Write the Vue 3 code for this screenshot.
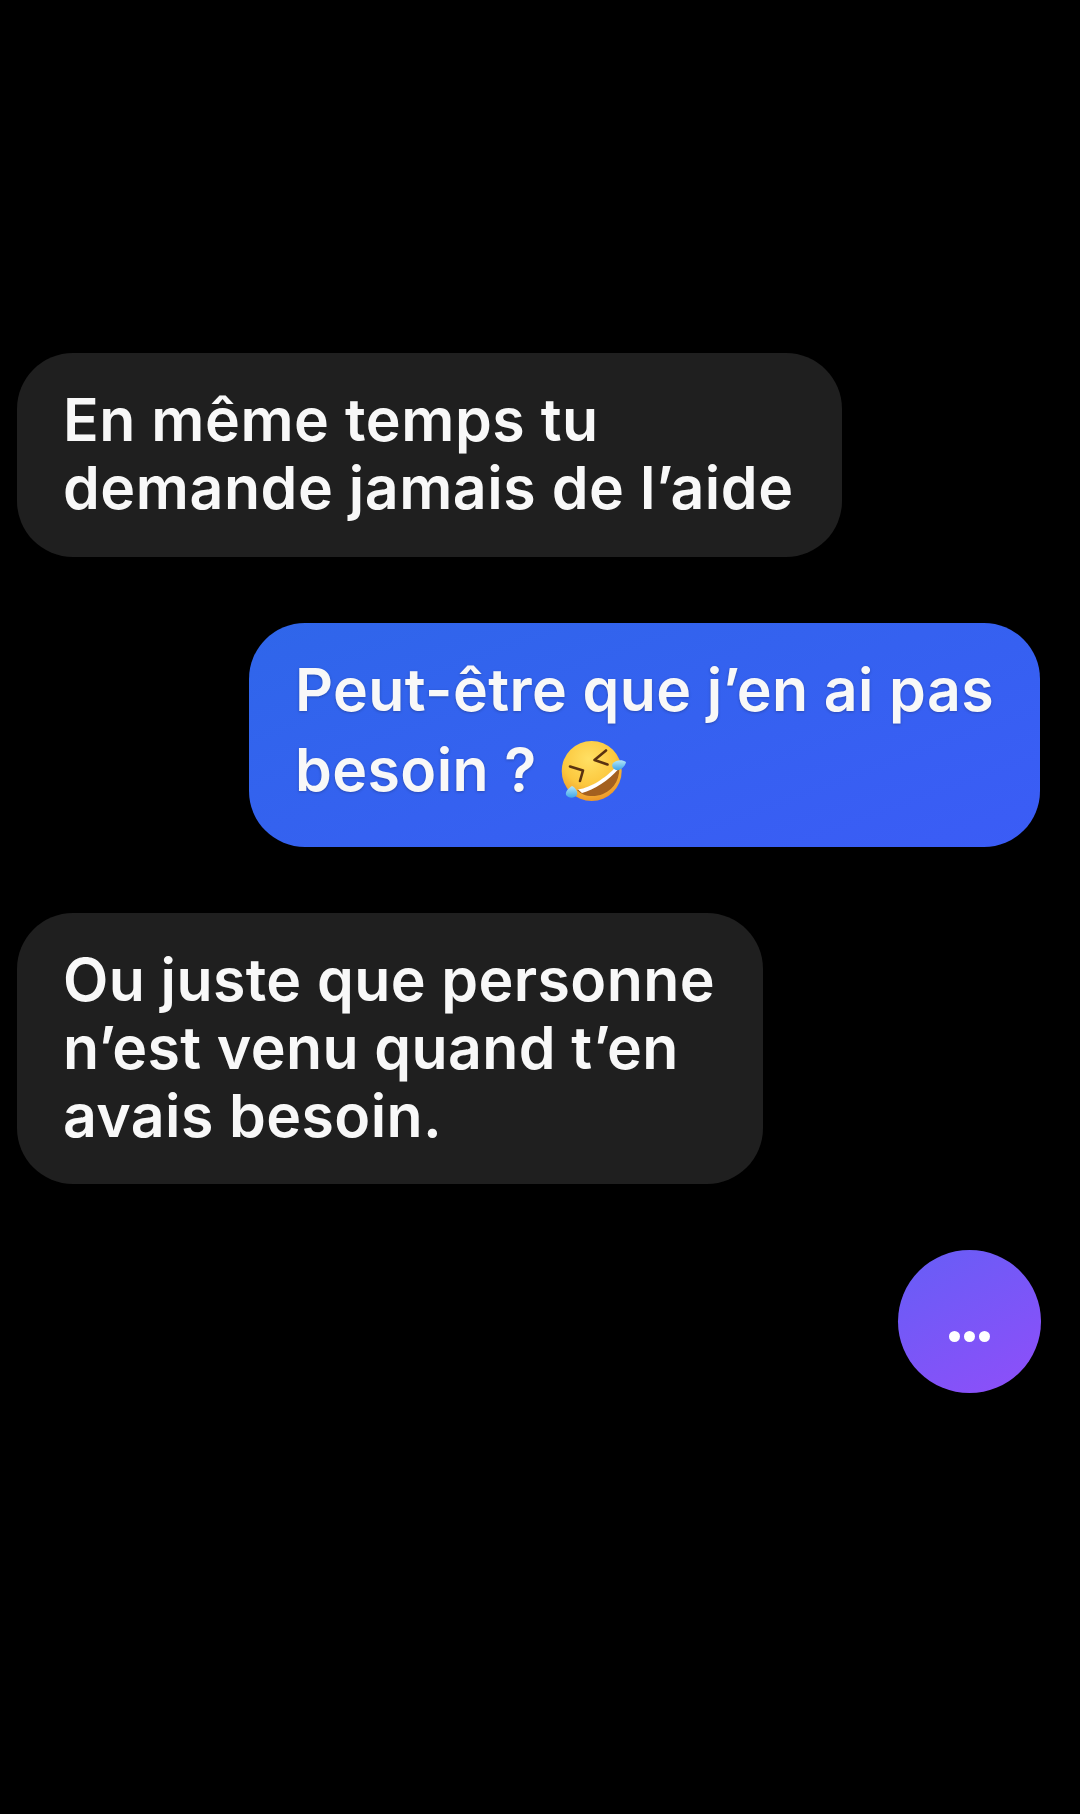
<template>
  <div class="chat">
    <div class="bubble other first">En même temps tu<br>demande jamais de l’aide</div>
    <div class="bubble mine">
      Peut-être que j’en ai pas<br>
      <span class="line">besoin ?
        <svg class="emoji" viewBox="18 5 68 64" width="68" height="64">
          <defs>
            <radialGradient id="face" cx="45%" cy="30%" r="72%">
              <stop offset="0" stop-color="#ffe064" />
              <stop offset="0.6" stop-color="#fcc83e" />
              <stop offset="1" stop-color="#ec9428" />
            </radialGradient>
            <linearGradient id="tear" x1="0" y1="0" x2="0" y2="1">
              <stop offset="0" stop-color="#b4e6f8" />
              <stop offset="1" stop-color="#3fa6ea" />
            </linearGradient>
          </defs>
          <circle cx="50.7" cy="38" r="30" fill="url(#face)" />
          <path d="M36 57 C50 56 68 44 78 30 C80 44 74 56 62 61 C52 65 41 63 36 57Z" fill="#a4601f" />
          <path d="M37 56.5 C50 55 68 43 77 31 L77.5 36 C68 47 53 57 41 60Z" fill="#fff" />
          <path d="M29 33.5 L42 37.5 L39 48" fill="none" stroke="#5a3210" stroke-width="2.6" stroke-linecap="round" stroke-linejoin="round" />
          <path d="M65 17.5 L53.5 27 L66.5 31.5" fill="none" stroke="#5a3210" stroke-width="2.6" stroke-linecap="round" stroke-linejoin="round" />
          <path d="M72 30 C75 27 81 26 85 29 C84 34 79 38 75 37 C72 36 70 33 72 30Z" fill="url(#tear)" />
          <path d="M31 53 C35 55 37 59 36 62 C33 66 27 65 25 62 C24 58 28 55 31 53Z" fill="url(#tear)" />
        </svg>
      </span>
    </div>
    <div class="bubble other last">Ou juste que personne<br>n’est venu quand t’en<br>avais besoin.</div>
    <div class="typing">
      <span class="dot"></span>
      <span class="dot"></span>
      <span class="dot"></span>
    </div>
  </div>
</template>

<script setup>
</script>

<style>
html, body {
  background: #000;
}
</style>

<style scoped>
.chat {
  width: 1080px;
  height: 1814px;
  box-sizing: border-box;
  padding: 353px 40px 0 17px;
  display: flex;
  flex-direction: column;
  gap: 66px;
  background: #000;
  font-family: Inter, "Liberation Sans", sans-serif;
  overflow: hidden;
}
.bubble {
  width: fit-content;
  box-sizing: border-box;
  padding: 33px 47px 34px 46px;
  border-radius: 56px;
  font-size: 59px;
  font-weight: 600;
  line-height: 68px;
  letter-spacing: 0.4px;
  color: #f8f8f8;
  white-space: nowrap;
}
.first {
  padding-bottom: 35px;
  padding-right: 48px;
  letter-spacing: 0.55px;
}
.last {
  padding-right: 48px;
}
.other {
  background: #1f1f1f;
}
.mine {
  align-self: flex-end;
  background: linear-gradient(160deg, #2f66ea, #3b5cf6);
  padding: 27px 46px 37px;
  line-height: 80px;
  text-shadow: 0 1px 3px rgba(0, 0, 0, 0.25);
}
.line {
  display: inline-flex;
  align-items: center;
  gap: 22px;
}
.emoji {
  display: block;
}
.typing {
  align-self: flex-end;
  margin-right: -1px;
  width: 143px;
  height: 143px;
  border-radius: 50%;
  background: linear-gradient(150deg, #665ef6, #8f4ef9);
  display: flex;
  justify-content: center;
  align-items: flex-end;
  gap: 4px;
  padding-bottom: 51px;
  box-sizing: border-box;
}
.dot {
  width: 11px;
  height: 11px;
  border-radius: 50%;
  background: #fff;
}
</style>
